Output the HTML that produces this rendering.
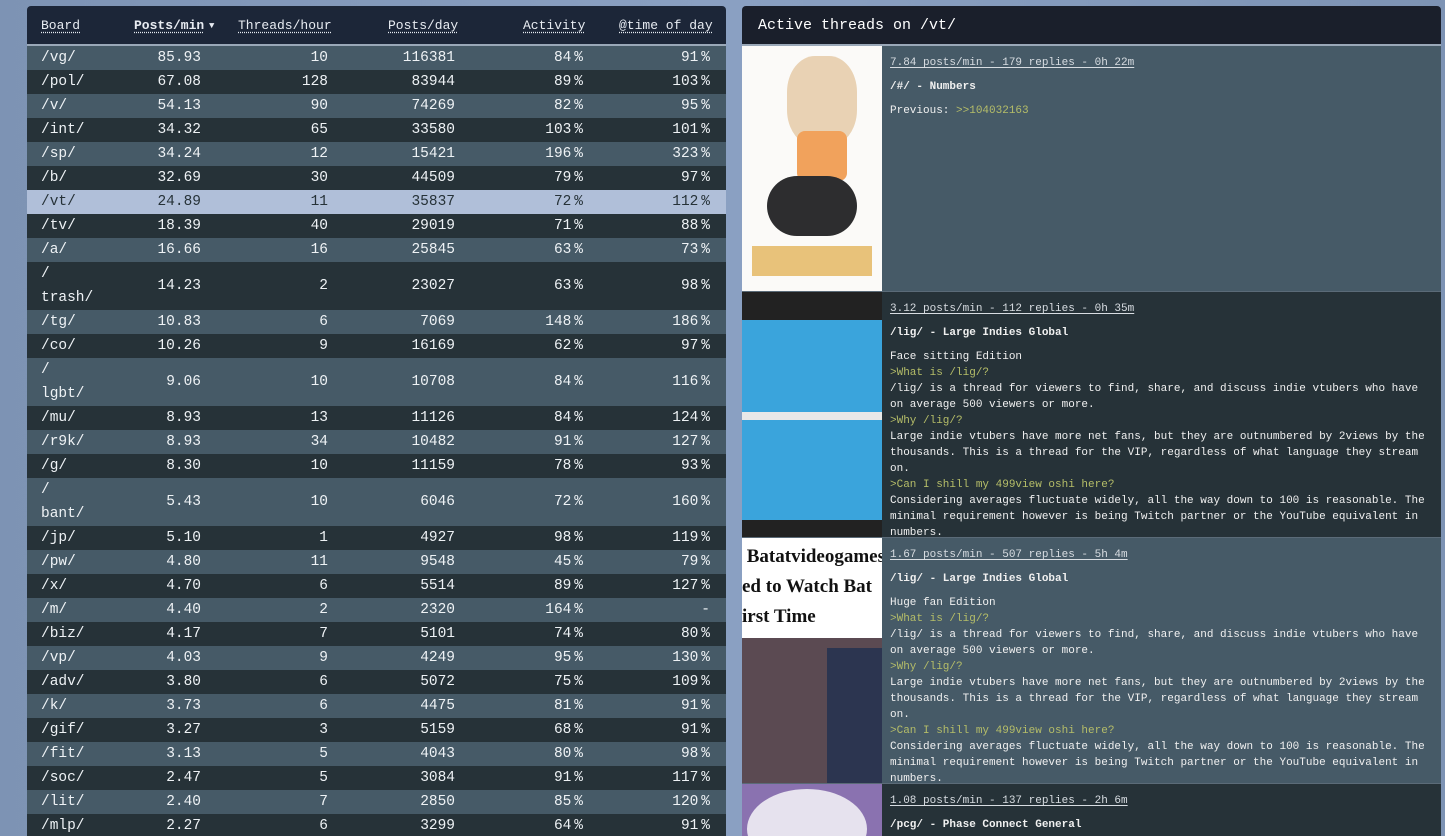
<!DOCTYPE html>
<html><head><meta charset="utf-8"><style>
*{margin:0;padding:0;box-sizing:border-box}
html{width:1445px;height:836px;overflow:hidden}
body{width:1445px;height:836px;overflow:hidden;background:linear-gradient(90deg,#7d93b4,#8aa0c2 50%,#7d93b4);font-family:"Liberation Mono","DejaVu Sans Mono",monospace;position:relative}
#tbl{position:absolute;left:27px;top:6px;width:699px;background:#1c2638;border-radius:4px 4px 0 0;overflow:hidden}
.hd{height:40px;border-bottom:2px solid #9aa8b8;position:relative;color:#e8ecf2;font-size:13px}
.hd span{position:absolute;top:12px;text-decoration:underline dotted;text-underline-offset:3px}
.r{position:relative;height:24px;color:#eef2f5;font-size:14.5px;line-height:24px}
.r.t{height:48px}
.r div{position:absolute;top:0;text-align:right}
.r .b{left:14px;text-align:left}
.r.t .b{line-height:24px}
.r.t .n{line-height:48px}
.l{background:#465a67}.d{background:#263238}.h{background:#b0bfd9;color:#263238}
.c1{right:525px}.c2{right:398px}.c3{right:271px}.c4{right:143px}.c5{right:16px}
#thr{position:absolute;left:742px;top:6px;width:699px;background:#1a1f2b;border-radius:4px 4px 0 0;overflow:hidden}
.th{height:40px;border-bottom:2px solid #9aa8b8;color:#fff;font-size:15px;padding:11px 16px}
.tb{height:246px;position:relative;overflow:hidden;border-bottom:1px solid #5b6b78}
.img{position:absolute;left:0;top:0;width:140px;height:246px;overflow:hidden}
.tx{position:absolute;left:148px;top:0;width:545px;height:244px;overflow:hidden;color:#f0f0f0;font-size:11px;line-height:16px;padding-top:9px}
.tx .m{text-decoration:underline;text-underline-offset:2px;color:#d8dde2}
.tx .s{font-weight:bold;margin:8px 0}
.g{color:#b5bd68}
</style></head><body>
<div id="tbl">
<div class="hd"><span style="left:14px">Board</span><span style="left:107px;font-weight:bold">Posts/min</span><span style="left:182px;text-decoration:none;font-size:9px;top:15px">▼</span><span style="left:211px">Threads/hour</span><span style="left:361px">Posts/day</span><span style="left:496px">Activity</span><span style="left:592px">@time of day</span></div>
<div class="r l"><div class="b">/vg/</div><div class="c1">85.93</div><div class="c2">10</div><div class="c3">116381</div><div class="c4">84&thinsp;%</div><div class="c5">91&thinsp;%</div></div>
<div class="r d"><div class="b">/pol/</div><div class="c1">67.08</div><div class="c2">128</div><div class="c3">83944</div><div class="c4">89&thinsp;%</div><div class="c5">103&thinsp;%</div></div>
<div class="r l"><div class="b">/v/</div><div class="c1">54.13</div><div class="c2">90</div><div class="c3">74269</div><div class="c4">82&thinsp;%</div><div class="c5">95&thinsp;%</div></div>
<div class="r d"><div class="b">/int/</div><div class="c1">34.32</div><div class="c2">65</div><div class="c3">33580</div><div class="c4">103&thinsp;%</div><div class="c5">101&thinsp;%</div></div>
<div class="r l"><div class="b">/sp/</div><div class="c1">34.24</div><div class="c2">12</div><div class="c3">15421</div><div class="c4">196&thinsp;%</div><div class="c5">323&thinsp;%</div></div>
<div class="r d"><div class="b">/b/</div><div class="c1">32.69</div><div class="c2">30</div><div class="c3">44509</div><div class="c4">79&thinsp;%</div><div class="c5">97&thinsp;%</div></div>
<div class="r h"><div class="b">/vt/</div><div class="c1">24.89</div><div class="c2">11</div><div class="c3">35837</div><div class="c4">72&thinsp;%</div><div class="c5">112&thinsp;%</div></div>
<div class="r d"><div class="b">/tv/</div><div class="c1">18.39</div><div class="c2">40</div><div class="c3">29019</div><div class="c4">71&thinsp;%</div><div class="c5">88&thinsp;%</div></div>
<div class="r l"><div class="b">/a/</div><div class="c1">16.66</div><div class="c2">16</div><div class="c3">25845</div><div class="c4">63&thinsp;%</div><div class="c5">73&thinsp;%</div></div>
<div class="r d t"><div class="b">/<br>trash/</div><div class="c1 n">14.23</div><div class="c2 n">2</div><div class="c3 n">23027</div><div class="c4 n">63&thinsp;%</div><div class="c5 n">98&thinsp;%</div></div>
<div class="r l"><div class="b">/tg/</div><div class="c1">10.83</div><div class="c2">6</div><div class="c3">7069</div><div class="c4">148&thinsp;%</div><div class="c5">186&thinsp;%</div></div>
<div class="r d"><div class="b">/co/</div><div class="c1">10.26</div><div class="c2">9</div><div class="c3">16169</div><div class="c4">62&thinsp;%</div><div class="c5">97&thinsp;%</div></div>
<div class="r l t"><div class="b">/<br>lgbt/</div><div class="c1 n">9.06</div><div class="c2 n">10</div><div class="c3 n">10708</div><div class="c4 n">84&thinsp;%</div><div class="c5 n">116&thinsp;%</div></div>
<div class="r d"><div class="b">/mu/</div><div class="c1">8.93</div><div class="c2">13</div><div class="c3">11126</div><div class="c4">84&thinsp;%</div><div class="c5">124&thinsp;%</div></div>
<div class="r l"><div class="b">/r9k/</div><div class="c1">8.93</div><div class="c2">34</div><div class="c3">10482</div><div class="c4">91&thinsp;%</div><div class="c5">127&thinsp;%</div></div>
<div class="r d"><div class="b">/g/</div><div class="c1">8.30</div><div class="c2">10</div><div class="c3">11159</div><div class="c4">78&thinsp;%</div><div class="c5">93&thinsp;%</div></div>
<div class="r l t"><div class="b">/<br>bant/</div><div class="c1 n">5.43</div><div class="c2 n">10</div><div class="c3 n">6046</div><div class="c4 n">72&thinsp;%</div><div class="c5 n">160&thinsp;%</div></div>
<div class="r d"><div class="b">/jp/</div><div class="c1">5.10</div><div class="c2">1</div><div class="c3">4927</div><div class="c4">98&thinsp;%</div><div class="c5">119&thinsp;%</div></div>
<div class="r l"><div class="b">/pw/</div><div class="c1">4.80</div><div class="c2">11</div><div class="c3">9548</div><div class="c4">45&thinsp;%</div><div class="c5">79&thinsp;%</div></div>
<div class="r d"><div class="b">/x/</div><div class="c1">4.70</div><div class="c2">6</div><div class="c3">5514</div><div class="c4">89&thinsp;%</div><div class="c5">127&thinsp;%</div></div>
<div class="r l"><div class="b">/m/</div><div class="c1">4.40</div><div class="c2">2</div><div class="c3">2320</div><div class="c4">164&thinsp;%</div><div class="c5">-</div></div>
<div class="r d"><div class="b">/biz/</div><div class="c1">4.17</div><div class="c2">7</div><div class="c3">5101</div><div class="c4">74&thinsp;%</div><div class="c5">80&thinsp;%</div></div>
<div class="r l"><div class="b">/vp/</div><div class="c1">4.03</div><div class="c2">9</div><div class="c3">4249</div><div class="c4">95&thinsp;%</div><div class="c5">130&thinsp;%</div></div>
<div class="r d"><div class="b">/adv/</div><div class="c1">3.80</div><div class="c2">6</div><div class="c3">5072</div><div class="c4">75&thinsp;%</div><div class="c5">109&thinsp;%</div></div>
<div class="r l"><div class="b">/k/</div><div class="c1">3.73</div><div class="c2">6</div><div class="c3">4475</div><div class="c4">81&thinsp;%</div><div class="c5">91&thinsp;%</div></div>
<div class="r d"><div class="b">/gif/</div><div class="c1">3.27</div><div class="c2">3</div><div class="c3">5159</div><div class="c4">68&thinsp;%</div><div class="c5">91&thinsp;%</div></div>
<div class="r l"><div class="b">/fit/</div><div class="c1">3.13</div><div class="c2">5</div><div class="c3">4043</div><div class="c4">80&thinsp;%</div><div class="c5">98&thinsp;%</div></div>
<div class="r d"><div class="b">/soc/</div><div class="c1">2.47</div><div class="c2">5</div><div class="c3">3084</div><div class="c4">91&thinsp;%</div><div class="c5">117&thinsp;%</div></div>
<div class="r l"><div class="b">/lit/</div><div class="c1">2.40</div><div class="c2">7</div><div class="c3">2850</div><div class="c4">85&thinsp;%</div><div class="c5">120&thinsp;%</div></div>
<div class="r d"><div class="b">/mlp/</div><div class="c1">2.27</div><div class="c2">6</div><div class="c3">3299</div><div class="c4">64&thinsp;%</div><div class="c5">91&thinsp;%</div></div>
</div>

<div id="thr">
<div class="th">Active threads on /vt/</div>
<div class="tb l">
<div class="img" style="background:#fbfaf8"><div style="position:absolute;left:45px;top:10px;width:70px;height:90px;border-radius:40%;background:#e9d2b4"></div><div style="position:absolute;left:55px;top:85px;width:50px;height:50px;background:#f1a25c;border-radius:8px"></div><div style="position:absolute;left:25px;top:130px;width:90px;height:60px;background:#2d2d2f;border-radius:30px"></div><div style="position:absolute;left:10px;top:200px;width:120px;height:30px;background:#e8c27a"></div></div>
<div class="tx"><div class="m">7.84 posts/min - 179 replies - 0h 22m</div><div class="s">/#/ - Numbers</div><div>Previous: <span class="g">&gt;&gt;104032163</span></div></div>
</div>
<div class="tb d">
<div class="img" style="background:#222"><div style="position:absolute;left:0;top:28px;width:140px;height:200px;background:#3aa4dc"></div><div style="position:absolute;left:0;top:120px;width:140px;height:8px;background:#e8e8e8"></div></div>
<div class="tx"><div class="m">3.12 posts/min - 112 replies - 0h 35m</div><div class="s">/lig/ - Large Indies Global</div><div>Face sitting Edition<br><span class="g">&gt;What is /lig/?</span><br>/lig/ is a thread for viewers to find, share, and discuss indie vtubers who have on average 500 viewers or more.<br><span class="g">&gt;Why /lig/?</span><br>Large indie vtubers have more net fans, but they are outnumbered by 2views by the thousands. This is a thread for the VIP, regardless of what language they stream on.<br><span class="g">&gt;Can I shill my 499view oshi here?</span><br>Considering averages fluctuate widely, all the way down to 100 is reasonable. The minimal requirement however is being Twitch partner or the YouTube equivalent in numbers.</div></div>
</div>
<div class="tb l">
<div class="img" style="background:#fff"><div style="position:absolute;left:0;top:4px;font:bold 19px 'Liberation Serif',serif;color:#111;line-height:30px;white-space:nowrap">&nbsp;Batatvideogames<br>ed to Watch Bat<br>irst Time</div><div style="position:absolute;left:0;top:100px;width:140px;height:146px;background:#5b4a52"></div><div style="position:absolute;left:85px;top:110px;width:55px;height:136px;background:#2c3550"></div></div>
<div class="tx"><div class="m">1.67 posts/min - 507 replies - 5h 4m</div><div class="s">/lig/ - Large Indies Global</div><div>Huge fan Edition<br><span class="g">&gt;What is /lig/?</span><br>/lig/ is a thread for viewers to find, share, and discuss indie vtubers who have on average 500 viewers or more.<br><span class="g">&gt;Why /lig/?</span><br>Large indie vtubers have more net fans, but they are outnumbered by 2views by the thousands. This is a thread for the VIP, regardless of what language they stream on.<br><span class="g">&gt;Can I shill my 499view oshi here?</span><br>Considering averages fluctuate widely, all the way down to 100 is reasonable. The minimal requirement however is being Twitch partner or the YouTube equivalent in numbers.</div></div>
</div>
<div class="tb d">
<div class="img" style="background:#8a72b0"><div style="position:absolute;left:5px;top:5px;width:120px;height:80px;border-radius:50%;background:#e6e2ee"></div></div>
<div class="tx"><div class="m">1.08 posts/min - 137 replies - 2h 6m</div><div class="s">/pcg/ - Phase Connect General</div></div>
</div>
</div>
</body></html>
